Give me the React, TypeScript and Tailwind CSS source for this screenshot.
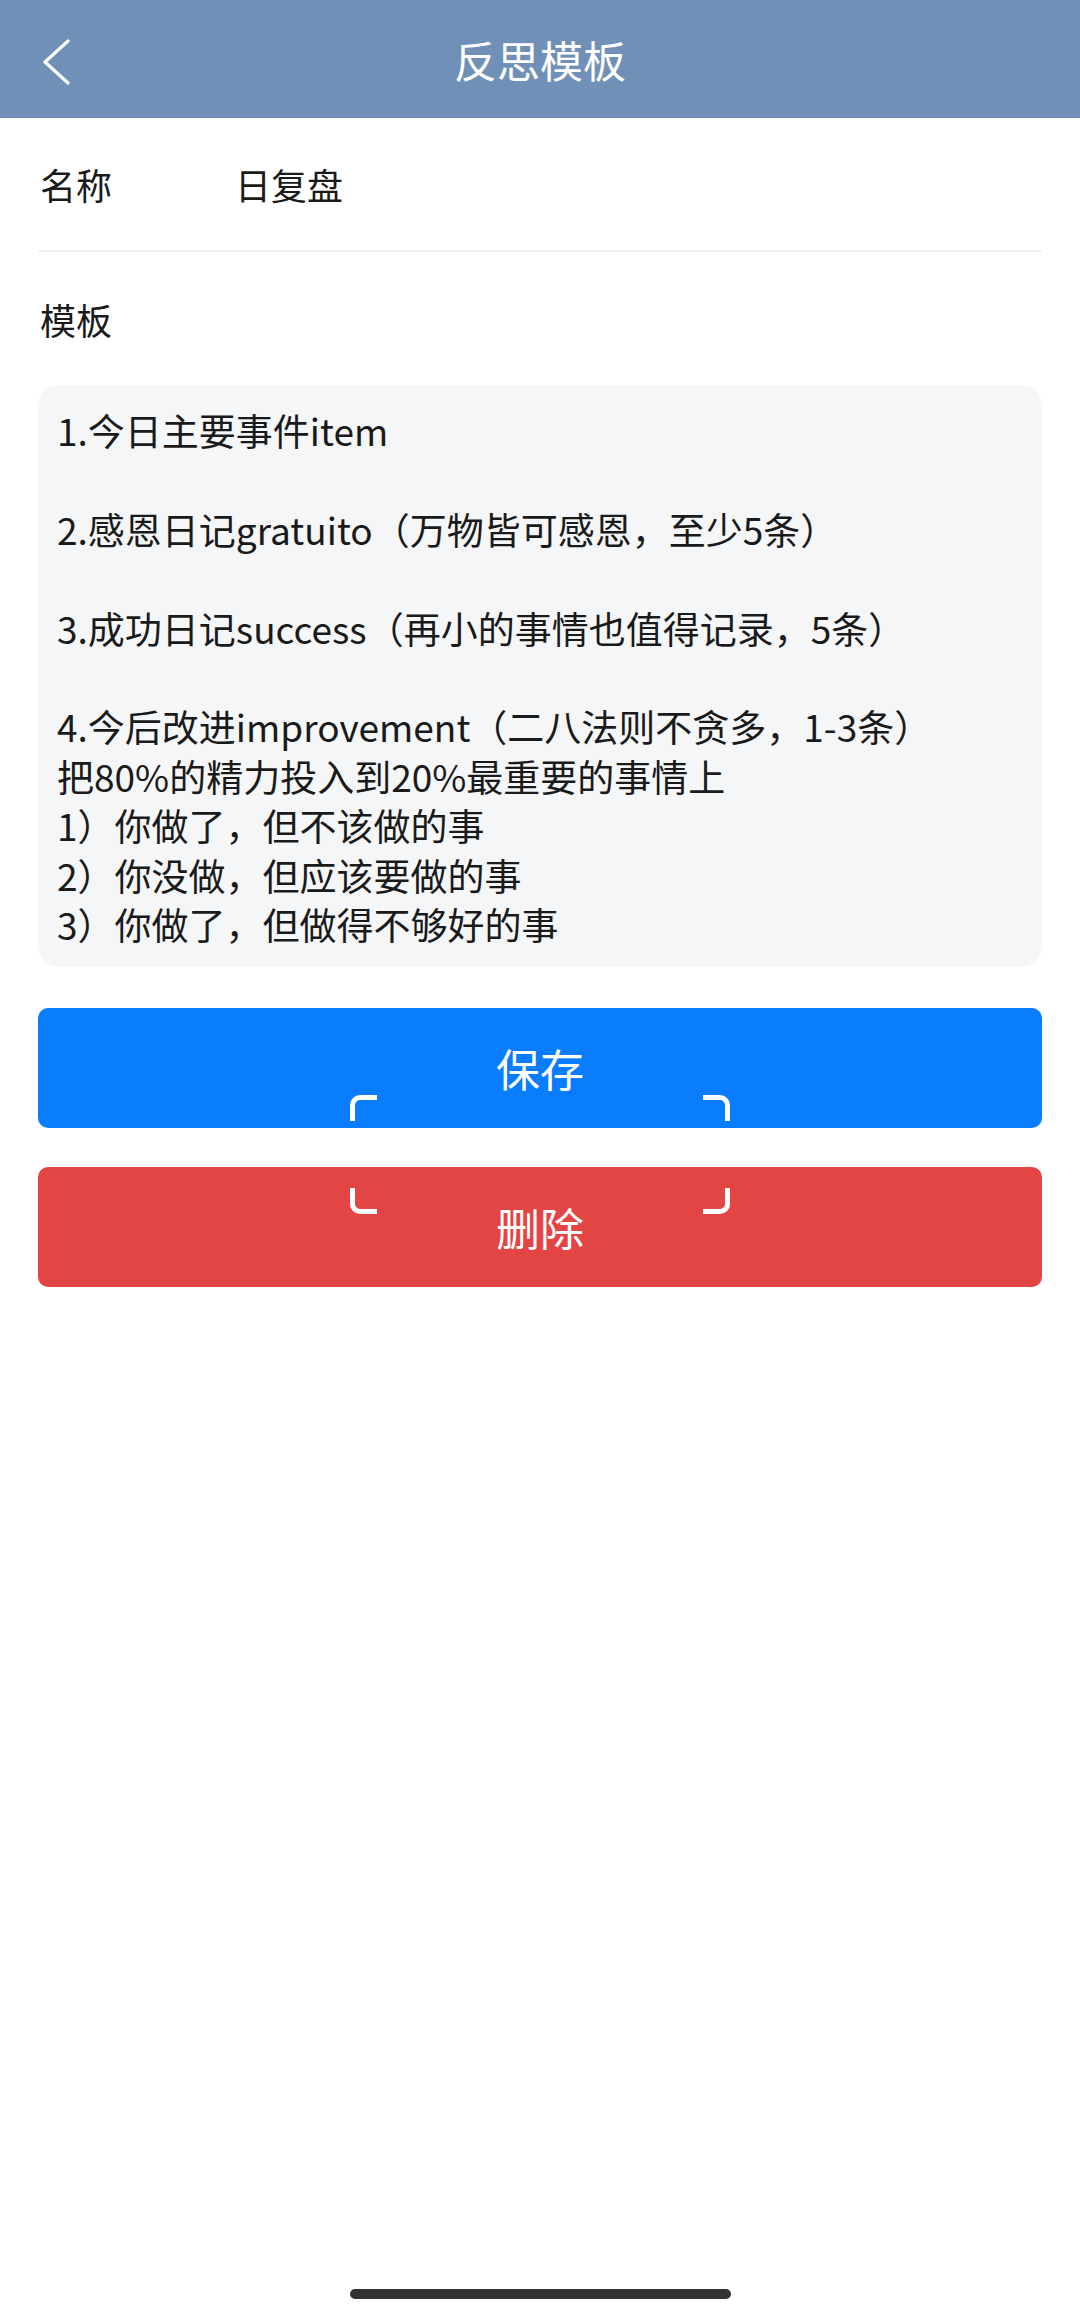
const templateLines = [
  "1.今日主要事件item",
  "",
  "2.感恩日记gratuito（万物皆可感恩，至少5条）",
  "",
  "3.成功日记success（再小的事情也值得记录，5条）",
  "",
  "4.今后改进improvement（二八法则不贪多，1-3条）",
  "把80%的精力投入到20%最重要的事情上",
  "1）你做了，但不该做的事",
  "2）你没做，但应该要做的事",
  "3）你做了，但做得不够好的事",
];

function BackIcon() {
  return (
    <svg width="30" height="46" viewBox="0 0 30 46" fill="none">
      <path
        d="M27 2 L4 23 L27 44"
        stroke="white"
        strokeWidth="3.2"
        strokeLinecap="round"
        strokeLinejoin="round"
      />
    </svg>
  );
}

// corner marks of the text-scan frame floating over the buttons
function ScanFrame() {
  return (
    <div className="pointer-events-none absolute left-[312px] top-[87px] h-[119px] w-[380px]">
      <div className="absolute left-0 top-0 h-[26px] w-[27px] rounded-tl-[10px] border-l-[5px] border-t-[5px] border-white" />
      <div className="absolute right-0 top-0 h-[26px] w-[27px] rounded-tr-[10px] border-r-[5px] border-t-[5px] border-white" />
      <div className="absolute bottom-0 left-0 h-[26px] w-[27px] rounded-bl-[10px] border-b-[5px] border-l-[5px] border-white" />
      <div className="absolute bottom-0 right-0 h-[26px] w-[27px] rounded-br-[10px] border-b-[5px] border-r-[5px] border-white" />
    </div>
  );
}

export default function App() {
  return (
    <div
      className="relative flex h-[2314px] w-[1080px] flex-col bg-white text-[#1a1a1a]"
      style={{ fontFamily: '"Noto Sans CJK SC", "Noto Sans", sans-serif' }}
    >
      <header className="relative flex h-[118px] shrink-0 items-center justify-center bg-[#7190b7]">
        <button className="absolute left-[41px] top-[39px]">
          <BackIcon />
        </button>
        <h1 className="text-[43px] leading-none text-white">反思模板</h1>
      </header>

      <main className="flex flex-col px-[38px]">
        <div className="flex h-[134px] items-center border-b-2 border-[#f1f1f1] pl-[2px] text-[36px]">
          <span className="w-[195px]">名称</span>
          <span>日复盘</span>
        </div>

        <div className="mt-[42px] pl-[2px] text-[36px] leading-[50px]">模板</div>

        <div className="mt-[41px] rounded-[20px] bg-[#f5f6f8] pb-[18px] pl-[19px] pr-[19px] pt-[21px] text-[37px] leading-[49.4px]">
          {templateLines.map((line, i) => (
            <div key={i} className="h-[49.4px] whitespace-nowrap">
              {line}
            </div>
          ))}
        </div>

        <div className="relative mt-[41px] flex flex-col gap-[39px]">
          <button className="h-[120px] rounded-[10px] bg-[#0a7cfe] text-[44px] text-white">
            保存
          </button>
          <button className="h-[120px] rounded-[10px] bg-[#e34545] text-[44px] text-white">
            删除
          </button>
          <ScanFrame />
        </div>
      </main>

      <div className="mt-auto flex justify-center pb-[15px]">
        <div className="h-[10px] w-[381px] rounded-full bg-[#333333]" />
      </div>
    </div>
  );
}
